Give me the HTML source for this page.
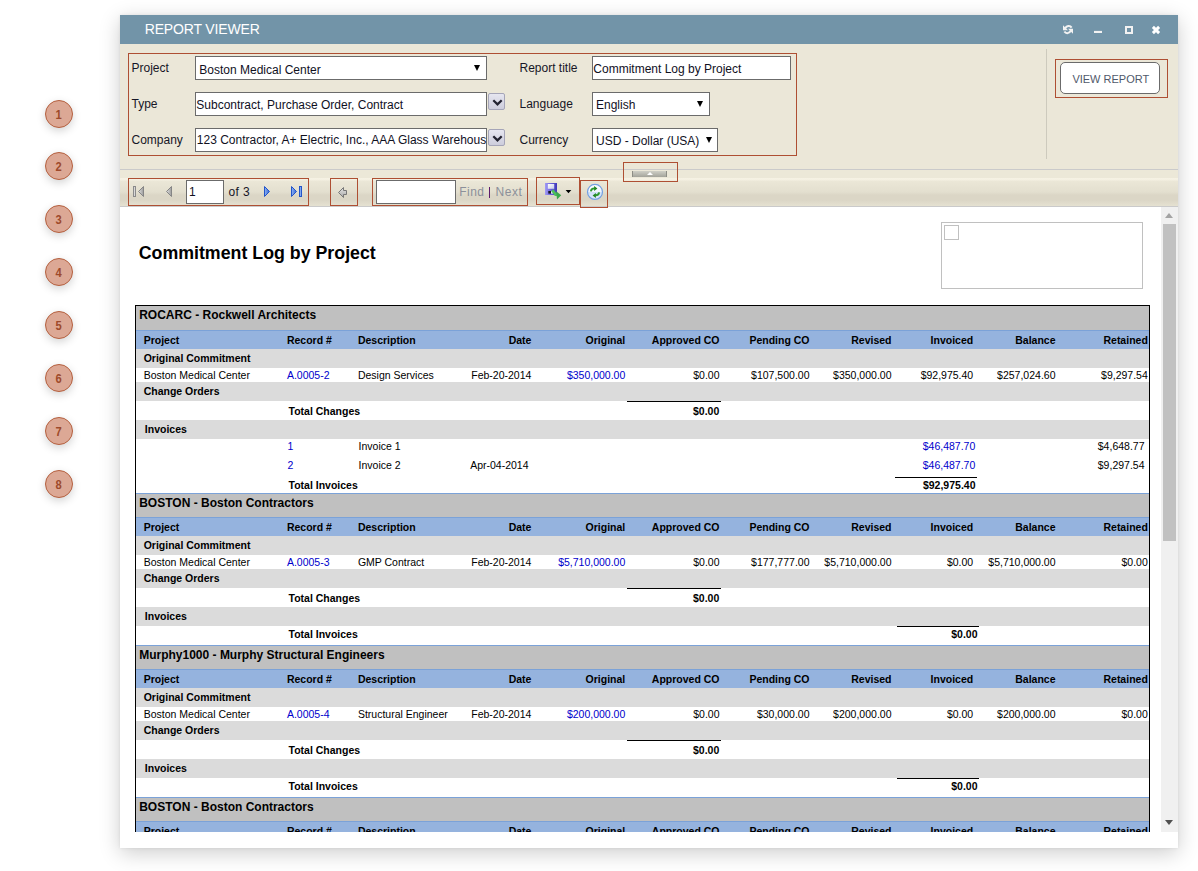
<!DOCTYPE html>
<html><head><meta charset="utf-8">
<style>
*{box-sizing:border-box;margin:0;padding:0}
html,body{width:1198px;height:871px;overflow:hidden;background:#fff;font-family:"Liberation Sans",sans-serif;position:relative}
.a{position:absolute}
.t{position:absolute;white-space:nowrap;font-family:"Liberation Sans",sans-serif}
.circ{position:absolute;left:45px;width:28px;height:28px;border-radius:50%;background:#dca895;border:1px solid #b5603f;color:#9e4a2b;font-weight:bold;font-size:13px;line-height:28px;text-align:center;box-shadow:0 3px 9px rgba(0,0,0,0.17)}
.circ span{display:inline-block;transform:scaleX(0.86)}
.dbtn{width:17px;height:17px;border:1px solid #a5a5b8;border-radius:2px;background:linear-gradient(#e6e6f0,#cdcddc)}
</style></head><body>
<div class="circ" style="top:100px"><span>1</span></div>
<div class="circ" style="top:152px"><span>2</span></div>
<div class="circ" style="top:205px"><span>3</span></div>
<div class="circ" style="top:258px"><span>4</span></div>
<div class="circ" style="top:311px"><span>5</span></div>
<div class="circ" style="top:364px"><span>6</span></div>
<div class="circ" style="top:417px"><span>7</span></div>
<div class="circ" style="top:470px"><span>8</span></div>
<div class="a" style="left:120px;top:15px;width:1058px;height:833px;background:#fff;box-shadow:0 5px 20px rgba(0,0,0,0.20),0 0 3px rgba(0,0,0,0.08)"></div>
<div class="a" style="left:120px;top:15px;width:1058px;height:29px;background:#7294a8"></div>
<div class="t" style="left:144.7px;top:20.9px;font-size:14px;line-height:16px;color:#fff;letter-spacing:-0.15px">REPORT VIEWER</div>
<svg class="a" style="left:1060px;top:22px" width="110" height="16" viewBox="1060 22 110 16">
<g fill="#f2f2f2">
<path d="M1063 25.3 L1063 30.3 L1068 30.3 Z"/>
<path d="M1073 33.7 L1073 28.7 L1068 28.7 Z"/>
</g>
<path d="M1065 28.6 Q1066.5 25.8 1068.8 25.9 Q1070.6 26 1071.6 27.6" fill="none" stroke="#f2f2f2" stroke-width="2"/>
<path d="M1071 30.6 Q1069.5 33.3 1067.2 33.2 Q1065.4 33.1 1064.4 31.5" fill="none" stroke="#f2f2f2" stroke-width="2"/>
<rect x="1094" y="30.9" width="8" height="2.1" fill="#f2f2f2"/>
<path fill-rule="evenodd" fill="#f2f2f2" d="M1125 26 H1133 V34 H1125 Z M1127 28 V32 H1131 V28 Z"/>
<path d="M1152.9 26.9 L1159.1 33.1 M1159.1 26.9 L1152.9 33.1" stroke="#fff" stroke-width="2.9" stroke-linecap="butt"/>
</svg>
<div class="a" style="left:120px;top:44px;width:1058px;height:125px;background:#ebe7d8"></div>
<div class="a" style="left:128px;top:53px;width:669px;height:103px;border:1px solid #ae4f33"></div>
<div class="t" style="left:131.5px;top:61.3px;font-size:12px;line-height:14px;color:#161626;">Project</div>
<div class="t" style="left:131.5px;top:97.3px;font-size:12px;line-height:14px;color:#161626;">Type</div>
<div class="t" style="left:131.5px;top:133.3px;font-size:12px;line-height:14px;color:#161626;">Company</div>
<div class="t" style="left:519.5px;top:61.3px;font-size:12px;line-height:14px;color:#161626;">Report title</div>
<div class="t" style="left:519.5px;top:97.3px;font-size:12px;line-height:14px;color:#161626;">Language</div>
<div class="t" style="left:519.5px;top:133.3px;font-size:12px;line-height:14px;color:#161626;">Currency</div>
<div class="a" style="left:195px;top:56px;width:292px;height:24px;background:#fff;border:1px solid #6b6b6b"></div>
<div class="t" style="left:199.3px;top:62.5px;font-size:12px;line-height:14px;color:#10101e;">Boston Medical Center</div>
<div class="a" style="left:474px;top:65px;width:6px;height:6px;width:0;height:0;border-left:3px solid transparent;border-right:3px solid transparent;border-top:6px solid #000"></div>
<div class="a" style="left:195px;top:92px;width:292px;height:24px;background:#fff;border:1px solid #6b6b6b"></div>
<div class="t" style="left:196.3px;top:98.0px;font-size:12px;line-height:14px;color:#10101e;">Subcontract, Purchase Order, Contract</div>
<div class="a" style="left:195px;top:128px;width:292px;height:24px;overflow:hidden;background:#fff;border:1px solid #6b6b6b"><div class="t" style="left:0.8px;top:3.7px;font-size:12px;line-height:14px;color:#10101e;">123 Contractor, A+ Electric, Inc., AAA Glass Warehouse</div></div>
<div class="a dbtn" style="left:488px;top:93px"><svg width="17" height="17" viewBox="0 0 17 17" style="position:absolute;left:0;top:0"><path d="M4.3 6.2 L8.5 10.4 L12.7 6.2" fill="none" stroke="#222230" stroke-width="2.2"/></svg></div>
<div class="a dbtn" style="left:488px;top:129px"><svg width="17" height="17" viewBox="0 0 17 17" style="position:absolute;left:0;top:0"><path d="M4.3 6.2 L8.5 10.4 L12.7 6.2" fill="none" stroke="#222230" stroke-width="2.2"/></svg></div>
<div class="a" style="left:592px;top:56px;width:199px;height:24px;background:#fff;border:1px solid #6b6b6b"></div>
<div class="t" style="left:593.3px;top:62.0px;font-size:12px;line-height:14px;color:#10101e;">Commitment Log by Project</div>
<div class="a" style="left:592px;top:92px;width:118px;height:24px;background:#fff;border:1px solid #6b6b6b"></div>
<div class="t" style="left:596.0px;top:98.1px;font-size:12px;line-height:14px;color:#10101e;">English</div>
<div class="a" style="left:697px;top:101px;width:6px;height:6px;width:0;height:0;border-left:3px solid transparent;border-right:3px solid transparent;border-top:6px solid #000"></div>
<div class="a" style="left:592px;top:128px;width:126px;height:24px;background:#fff;border:1px solid #6b6b6b"></div>
<div class="t" style="left:596.0px;top:134.1px;font-size:12px;line-height:14px;color:#10101e;">USD - Dollar (USA)</div>
<div class="a" style="left:706px;top:137px;width:6px;height:6px;width:0;height:0;border-left:3px solid transparent;border-right:3px solid transparent;border-top:6px solid #000"></div>
<div class="a" style="left:1046px;top:49px;width:1px;height:110px;background:#cdcabd"></div>
<div class="a" style="left:1055px;top:59px;width:113px;height:39px;border:1px solid #ae4f33"></div>
<div class="a" style="left:1060px;top:62px;width:100px;height:32px;border:1px solid #6b6b6b;border-radius:5px;background:#fff"></div>
<div class="t" style="left:1072.4px;top:72.7px;font-size:11px;line-height:13px;color:#50586a;">VIEW REPORT</div>
<div class="a" style="left:120px;top:169px;width:1058px;height:1px;background:#cacaca"></div>
<div class="a" style="left:120px;top:170px;width:1058px;height:36px;background:linear-gradient(#ece8d8 0px,#ece8d8 8px,#f6f2e4 8px,#f4f0e2 10px,#ebe7d7 11px,#e3dfcf 22px,#dbd6c6 25px,#dbd6c6 30px,#e5e1d1 36px)"></div>
<div class="a" style="left:120px;top:206px;width:1058px;height:1px;background:#cacaca"></div>
<div class="a" style="left:623px;top:162px;width:55px;height:20px;border:1px solid #ae4f33"></div>
<div class="a" style="left:632px;top:171px;width:35px;height:6px;background:linear-gradient(#cfcfc6,#a3a39a);border-left:1px solid #8d8d85;border-right:1px solid #8d8d85"></div>
<div class="a" style="left:647px;top:172px;width:6px;height:3px;width:0;height:0;border-left:3px solid transparent;border-right:3px solid transparent;border-bottom:3px solid #fff"></div>
<div class="a" style="left:128px;top:178px;width:181px;height:28px;border:1px solid #ae4f33"></div>
<svg class="a" style="left:128px;top:178px" width="182" height="28" viewBox="128 178 182 28">
<defs>
<linearGradient id="gg" x1="0" y1="0" x2="1" y2="0"><stop offset="0" stop-color="#e0e0e0"/><stop offset="1" stop-color="#9c9c9c"/></linearGradient>
<linearGradient id="bg" x1="0" y1="0" x2="1" y2="0"><stop offset="0" stop-color="#8fb4f4"/><stop offset="1" stop-color="#2f62d6"/></linearGradient>
</defs>
<rect x="133.5" y="186.5" width="2" height="10" fill="#d8d8d8" stroke="#8a8a8a"/>
<path d="M138.5 191.5 L143.5 186.5 L143.5 196.5 Z" fill="url(#gg)" stroke="#858585" stroke-linejoin="round"/>
<path d="M166.5 191.5 L171.5 186.5 L171.5 196.5 Z" fill="url(#gg)" stroke="#858585" stroke-linejoin="round"/>
<path d="M264.5 186.5 L269.5 191.5 L264.5 196.5 Z" fill="url(#bg)" stroke="#2355c8" stroke-linejoin="round"/>
<path d="M291.5 186.5 L296.5 191.5 L291.5 196.5 Z" fill="url(#bg)" stroke="#2355c8" stroke-linejoin="round"/>
<rect x="299.5" y="186.5" width="2" height="10" fill="#7fa6f0" stroke="#2355c8"/>
</svg>
<div class="a" style="left:186px;top:180px;width:38px;height:24px;background:#fff;border:1px solid #6b6b6b"></div>
<div class="t" style="left:189.0px;top:184.8px;font-size:12px;line-height:14px;color:#10101e;">1</div>
<div class="t" style="left:228.5px;top:184.8px;font-size:12px;line-height:14px;color:#161626;letter-spacing:0.4px">of 3</div>
<div class="a" style="left:330px;top:178px;width:28px;height:28px;border:1px solid #ae4f33"></div>
<svg class="a" style="left:330px;top:178px" width="28" height="28" viewBox="330 178 28 28">
<defs><linearGradient id="ag" x1="0" y1="0" x2="0" y2="1"><stop offset="0" stop-color="#e6e6e6"/><stop offset="1" stop-color="#a8a8a8"/></linearGradient></defs>
<path d="M338.5 192.5 L343.5 187.5 L343.5 190.5 L346.5 190.5 L346.5 194.5 L343.5 194.5 L343.5 197.5 Z" fill="url(#ag)" stroke="#777" stroke-linejoin="round"/>
</svg>
<div class="a" style="left:372px;top:178px;width:156px;height:28px;border:1px solid #ae4f33"></div>
<div class="a" style="left:376px;top:180px;width:80px;height:24px;background:#fff;border:1px solid #6b6b6b"></div>
<div class="t" style="left:459.2px;top:185.3px;font-size:12px;line-height:14px;color:#8c909a;letter-spacing:0.5px">Find</div>
<div class="a" style="left:488.8px;top:187px;width:1.5px;height:11px;background:#5c1c6c"></div>
<div class="t" style="left:495.6px;top:185.3px;font-size:12px;line-height:14px;color:#8c909a;letter-spacing:0.5px">Next</div>
<div class="a" style="left:536px;top:177px;width:44px;height:28px;border:1px solid #ae4f33"></div>
<svg class="a" style="left:536px;top:177px" width="44" height="28" viewBox="536 177 44 28">
<defs><linearGradient id="fl" x1="0" y1="0" x2="1" y2="0"><stop offset="0" stop-color="#a29cf4"/><stop offset="0.5" stop-color="#6a62dc"/><stop offset="1" stop-color="#4036b8"/></linearGradient>
<linearGradient id="lb" x1="0" y1="0" x2="1" y2="1"><stop offset="0" stop-color="#ffffff"/><stop offset="1" stop-color="#c8cce8"/></linearGradient></defs>
<rect x="545" y="183" width="12" height="12" fill="url(#fl)"/>
<rect x="547.8" y="184" width="6.4" height="4.8" fill="url(#lb)"/>
<rect x="548.3" y="191" width="2.7" height="2.6" fill="#151520"/>
<rect x="551" y="191" width="2" height="2.6" fill="#e0e4f0"/>
<path d="M552.3 190.2 L555.6 194.6 L557.2 194.6" fill="none" stroke="#4cbf5c" stroke-width="2.8" stroke-linejoin="round"/>
<path d="M556.2 191.2 L561.2 195.2 L557 199.4 Z" fill="#3aa84a"/>
<path d="M565.6 190 L571.3 190 L568.45 193.2 Z" fill="#000"/>
</svg>
<div class="a" style="left:580px;top:180px;width:28px;height:28px;border:1px solid #ae4f33"></div>
<svg class="a" style="left:580px;top:180px" width="28" height="28" viewBox="580 180 28 28">
<defs><linearGradient id="rg" x1="0" y1="0" x2="0" y2="1"><stop offset="0" stop-color="#ffffff"/><stop offset="0.5" stop-color="#eef4fd"/><stop offset="0.5" stop-color="#cfe1f8"/><stop offset="1" stop-color="#dde9fb"/></linearGradient></defs>
<circle cx="595" cy="191.9" r="7.5" fill="url(#rg)" stroke="#74a0e2" stroke-width="1.2"/>
<path d="M590.9 191.4 Q591 188.6 594.6 188.4" fill="none" stroke="#2e9a2e" stroke-width="1.9"/>
<path d="M594.1 185.9 L597.4 188.4 L594.1 190.9 Z" fill="#1f861f"/>
<path d="M599.1 192.4 Q599 195.2 595.4 195.4" fill="none" stroke="#2e9a2e" stroke-width="1.9"/>
<path d="M595.9 192.9 L592.6 195.4 L595.9 197.9 Z" fill="#1f861f"/>
</svg>
<div class="a" style="left:1161px;top:207px;width:17px;height:625px;background:#f0f0f0"></div>
<div class="a" style="left:1163px;top:224px;width:13px;height:317px;background:#c1c1c1"></div>
<div class="a" style="left:1165px;top:213px;width:8px;height:5px;width:0;height:0;border-left:4px solid transparent;border-right:4px solid transparent;border-bottom:5px solid #a3a3a3"></div>
<div class="a" style="left:1165px;top:820px;width:8px;height:5px;width:0;height:0;border-left:4px solid transparent;border-right:4px solid transparent;border-top:5px solid #505050"></div>
<div class="t" style="left:138.7px;top:242.6px;font-size:17.8px;line-height:20px;font-weight:bold;color:#000;">Commitment Log by Project</div>
<div class="a" style="left:941px;top:222px;width:202px;height:67px;border:1px solid #c0c0c0"></div>
<div class="a" style="left:944px;top:225px;width:15px;height:15px;border:1px solid #c0c0c0"></div>
<div class="a" style="left:0;top:0;width:1198px;height:832px;overflow:hidden"><div class="a" style="left:135px;top:305px;width:1015px;height:1px;background:#000"></div>
<div class="a" style="left:136px;top:306px;width:1013px;height:24px;background:#c0c0c0"></div>
<div class="t" style="left:139.2px;top:307.6px;font-size:12px;line-height:14px;font-weight:bold;color:#000;">ROCARC - Rockwell Architects</div>
<div class="a" style="left:136px;top:330px;width:1013px;height:1px;background:#7ba2d8"></div>
<div class="a" style="left:136px;top:331px;width:1013px;height:18px;background:#95b3de"></div>
<div class="t" style="left:143.7px;top:334.2px;font-size:10.5px;line-height:12px;font-weight:bold;color:#000;">Project</div>
<div class="t" style="left:286.9px;top:334.2px;font-size:10.5px;line-height:12px;font-weight:bold;color:#000;">Record #</div>
<div class="t" style="left:357.9px;top:334.2px;font-size:10.5px;line-height:12px;font-weight:bold;color:#000;">Description</div>
<div class="t" style="left:131.4px;width:400px;text-align:right;top:334.2px;font-size:10.5px;line-height:12px;font-weight:bold;color:#000;">Date</div>
<div class="t" style="left:225.3px;width:400px;text-align:right;top:334.2px;font-size:10.5px;line-height:12px;font-weight:bold;color:#000;">Original</div>
<div class="t" style="left:319.5px;width:400px;text-align:right;top:334.2px;font-size:10.5px;line-height:12px;font-weight:bold;color:#000;">Approved CO</div>
<div class="t" style="left:409.5px;width:400px;text-align:right;top:334.2px;font-size:10.5px;line-height:12px;font-weight:bold;color:#000;">Pending CO</div>
<div class="t" style="left:491.5px;width:400px;text-align:right;top:334.2px;font-size:10.5px;line-height:12px;font-weight:bold;color:#000;">Revised</div>
<div class="t" style="left:573.2px;width:400px;text-align:right;top:334.2px;font-size:10.5px;line-height:12px;font-weight:bold;color:#000;">Invoiced</div>
<div class="t" style="left:655.5px;width:400px;text-align:right;top:334.2px;font-size:10.5px;line-height:12px;font-weight:bold;color:#000;">Balance</div>
<div class="t" style="left:747.8px;width:400px;text-align:right;top:334.2px;font-size:10.5px;line-height:12px;font-weight:bold;color:#000;">Retained</div>
<div class="a" style="left:136px;top:349px;width:1013px;height:19px;background:#dbdbdb"></div>
<div class="t" style="left:143.7px;top:351.9px;font-size:10.5px;line-height:12px;font-weight:bold;color:#000;">Original Commitment</div>
<div class="t" style="left:143.7px;top:368.5px;font-size:10.5px;line-height:12px;color:#000;">Boston Medical Center</div>
<div class="t" style="left:286.9px;top:368.5px;font-size:10.5px;line-height:12px;color:#0000cc;">A.0005-2</div>
<div class="t" style="left:357.9px;top:368.5px;font-size:10.5px;line-height:12px;color:#000;">Design Services</div>
<div class="t" style="left:131.4px;width:400px;text-align:right;top:368.5px;font-size:10.5px;line-height:12px;color:#000;">Feb-20-2014</div>
<div class="t" style="left:225.3px;width:400px;text-align:right;top:368.5px;font-size:10.5px;line-height:12px;color:#0000cc;">$350,000.00</div>
<div class="t" style="left:319.5px;width:400px;text-align:right;top:368.5px;font-size:10.5px;line-height:12px;color:#000;">$0.00</div>
<div class="t" style="left:409.5px;width:400px;text-align:right;top:368.5px;font-size:10.5px;line-height:12px;color:#000;">$107,500.00</div>
<div class="t" style="left:491.5px;width:400px;text-align:right;top:368.5px;font-size:10.5px;line-height:12px;color:#000;">$350,000.00</div>
<div class="t" style="left:573.2px;width:400px;text-align:right;top:368.5px;font-size:10.5px;line-height:12px;color:#000;">$92,975.40</div>
<div class="t" style="left:655.5px;width:400px;text-align:right;top:368.5px;font-size:10.5px;line-height:12px;color:#000;">$257,024.60</div>
<div class="t" style="left:747.8px;width:400px;text-align:right;top:368.5px;font-size:10.5px;line-height:12px;color:#000;">$9,297.54</div>
<div class="a" style="left:136px;top:382px;width:1013px;height:19px;background:#dbdbdb"></div>
<div class="t" style="left:143.7px;top:385.1px;font-size:10.5px;line-height:12px;font-weight:bold;color:#000;">Change Orders</div>
<div class="a" style="left:627px;top:401px;width:94px;height:1px;background:#000"></div>
<div class="t" style="left:288.5px;top:404.9px;font-size:10.5px;line-height:12px;font-weight:bold;color:#000;">Total Changes</div>
<div class="t" style="left:319.3px;width:400px;text-align:right;top:404.9px;font-size:10.5px;line-height:12px;font-weight:bold;color:#000;">$0.00</div>
<div class="a" style="left:136px;top:420px;width:1013px;height:19px;background:#dbdbdb"></div>
<div class="t" style="left:144.8px;top:423.4px;font-size:10.5px;line-height:12px;font-weight:bold;color:#000;">Invoices</div>
<div class="t" style="left:287.6px;top:439.8px;font-size:10.5px;line-height:12px;color:#0000cc;">1</div>
<div class="t" style="left:358.6px;top:439.8px;font-size:10.5px;line-height:12px;color:#000;">Invoice 1</div>
<div class="t" style="left:575.3px;width:400px;text-align:right;top:439.8px;font-size:10.5px;line-height:12px;color:#0000cc;">$46,487.70</div>
<div class="t" style="left:744.5px;width:400px;text-align:right;top:439.8px;font-size:10.5px;line-height:12px;color:#000;">$4,648.77</div>
<div class="t" style="left:287.6px;top:459.0px;font-size:10.5px;line-height:12px;color:#0000cc;">2</div>
<div class="t" style="left:358.6px;top:459.0px;font-size:10.5px;line-height:12px;color:#000;">Invoice 2</div>
<div class="t" style="left:128.5px;width:400px;text-align:right;top:459.0px;font-size:10.5px;line-height:12px;color:#000;">Apr-04-2014</div>
<div class="t" style="left:575.3px;width:400px;text-align:right;top:459.0px;font-size:10.5px;line-height:12px;color:#0000cc;">$46,487.70</div>
<div class="t" style="left:744.5px;width:400px;text-align:right;top:459.0px;font-size:10.5px;line-height:12px;color:#000;">$9,297.54</div>
<div class="a" style="left:895px;top:477px;width:82px;height:1px;background:#000"></div>
<div class="t" style="left:288.5px;top:479.4px;font-size:10.5px;line-height:12px;font-weight:bold;color:#000;">Total Invoices</div>
<div class="t" style="left:575.5px;width:400px;text-align:right;top:479.4px;font-size:10.5px;line-height:12px;font-weight:bold;color:#000;">$92,975.40</div>
<div class="a" style="left:135px;top:493px;width:1015px;height:1px;background:#7ba2d8"></div>
<div class="a" style="left:136px;top:494px;width:1013px;height:23px;background:#c0c0c0"></div>
<div class="t" style="left:139.2px;top:495.6px;font-size:12px;line-height:14px;font-weight:bold;color:#000;">BOSTON - Boston Contractors</div>
<div class="a" style="left:136px;top:517px;width:1013px;height:1px;background:#7ba2d8"></div>
<div class="a" style="left:136px;top:518px;width:1013px;height:18px;background:#95b3de"></div>
<div class="t" style="left:143.7px;top:521.2px;font-size:10.5px;line-height:12px;font-weight:bold;color:#000;">Project</div>
<div class="t" style="left:286.9px;top:521.2px;font-size:10.5px;line-height:12px;font-weight:bold;color:#000;">Record #</div>
<div class="t" style="left:357.9px;top:521.2px;font-size:10.5px;line-height:12px;font-weight:bold;color:#000;">Description</div>
<div class="t" style="left:131.4px;width:400px;text-align:right;top:521.2px;font-size:10.5px;line-height:12px;font-weight:bold;color:#000;">Date</div>
<div class="t" style="left:225.3px;width:400px;text-align:right;top:521.2px;font-size:10.5px;line-height:12px;font-weight:bold;color:#000;">Original</div>
<div class="t" style="left:319.5px;width:400px;text-align:right;top:521.2px;font-size:10.5px;line-height:12px;font-weight:bold;color:#000;">Approved CO</div>
<div class="t" style="left:409.5px;width:400px;text-align:right;top:521.2px;font-size:10.5px;line-height:12px;font-weight:bold;color:#000;">Pending CO</div>
<div class="t" style="left:491.5px;width:400px;text-align:right;top:521.2px;font-size:10.5px;line-height:12px;font-weight:bold;color:#000;">Revised</div>
<div class="t" style="left:573.2px;width:400px;text-align:right;top:521.2px;font-size:10.5px;line-height:12px;font-weight:bold;color:#000;">Invoiced</div>
<div class="t" style="left:655.5px;width:400px;text-align:right;top:521.2px;font-size:10.5px;line-height:12px;font-weight:bold;color:#000;">Balance</div>
<div class="t" style="left:747.8px;width:400px;text-align:right;top:521.2px;font-size:10.5px;line-height:12px;font-weight:bold;color:#000;">Retained</div>
<div class="a" style="left:136px;top:536px;width:1013px;height:19px;background:#dbdbdb"></div>
<div class="t" style="left:143.7px;top:538.9px;font-size:10.5px;line-height:12px;font-weight:bold;color:#000;">Original Commitment</div>
<div class="t" style="left:143.7px;top:555.5px;font-size:10.5px;line-height:12px;color:#000;">Boston Medical Center</div>
<div class="t" style="left:286.9px;top:555.5px;font-size:10.5px;line-height:12px;color:#0000cc;">A.0005-3</div>
<div class="t" style="left:357.9px;top:555.5px;font-size:10.5px;line-height:12px;color:#000;">GMP Contract</div>
<div class="t" style="left:131.4px;width:400px;text-align:right;top:555.5px;font-size:10.5px;line-height:12px;color:#000;">Feb-20-2014</div>
<div class="t" style="left:225.3px;width:400px;text-align:right;top:555.5px;font-size:10.5px;line-height:12px;color:#0000cc;">$5,710,000.00</div>
<div class="t" style="left:319.5px;width:400px;text-align:right;top:555.5px;font-size:10.5px;line-height:12px;color:#000;">$0.00</div>
<div class="t" style="left:409.5px;width:400px;text-align:right;top:555.5px;font-size:10.5px;line-height:12px;color:#000;">$177,777.00</div>
<div class="t" style="left:491.5px;width:400px;text-align:right;top:555.5px;font-size:10.5px;line-height:12px;color:#000;">$5,710,000.00</div>
<div class="t" style="left:573.2px;width:400px;text-align:right;top:555.5px;font-size:10.5px;line-height:12px;color:#000;">$0.00</div>
<div class="t" style="left:655.5px;width:400px;text-align:right;top:555.5px;font-size:10.5px;line-height:12px;color:#000;">$5,710,000.00</div>
<div class="t" style="left:747.8px;width:400px;text-align:right;top:555.5px;font-size:10.5px;line-height:12px;color:#000;">$0.00</div>
<div class="a" style="left:136px;top:569px;width:1013px;height:19px;background:#dbdbdb"></div>
<div class="t" style="left:143.7px;top:572.1px;font-size:10.5px;line-height:12px;font-weight:bold;color:#000;">Change Orders</div>
<div class="a" style="left:627px;top:588px;width:94px;height:1px;background:#000"></div>
<div class="t" style="left:288.5px;top:591.9px;font-size:10.5px;line-height:12px;font-weight:bold;color:#000;">Total Changes</div>
<div class="t" style="left:319.3px;width:400px;text-align:right;top:591.9px;font-size:10.5px;line-height:12px;font-weight:bold;color:#000;">$0.00</div>
<div class="a" style="left:136px;top:607px;width:1013px;height:19px;background:#dbdbdb"></div>
<div class="t" style="left:144.8px;top:610.4px;font-size:10.5px;line-height:12px;font-weight:bold;color:#000;">Invoices</div>
<div class="a" style="left:897px;top:626px;width:82px;height:1px;background:#000"></div>
<div class="t" style="left:288.5px;top:628.4px;font-size:10.5px;line-height:12px;font-weight:bold;color:#000;">Total Invoices</div>
<div class="t" style="left:577.5px;width:400px;text-align:right;top:628.4px;font-size:10.5px;line-height:12px;font-weight:bold;color:#000;">$0.00</div>
<div class="a" style="left:135px;top:645px;width:1015px;height:1px;background:#7ba2d8"></div>
<div class="a" style="left:136px;top:646px;width:1013px;height:23px;background:#c0c0c0"></div>
<div class="t" style="left:139.2px;top:647.6px;font-size:12px;line-height:14px;font-weight:bold;color:#000;">Murphy1000 - Murphy Structural Engineers</div>
<div class="a" style="left:136px;top:669px;width:1013px;height:1px;background:#7ba2d8"></div>
<div class="a" style="left:136px;top:670px;width:1013px;height:18px;background:#95b3de"></div>
<div class="t" style="left:143.7px;top:673.2px;font-size:10.5px;line-height:12px;font-weight:bold;color:#000;">Project</div>
<div class="t" style="left:286.9px;top:673.2px;font-size:10.5px;line-height:12px;font-weight:bold;color:#000;">Record #</div>
<div class="t" style="left:357.9px;top:673.2px;font-size:10.5px;line-height:12px;font-weight:bold;color:#000;">Description</div>
<div class="t" style="left:131.4px;width:400px;text-align:right;top:673.2px;font-size:10.5px;line-height:12px;font-weight:bold;color:#000;">Date</div>
<div class="t" style="left:225.3px;width:400px;text-align:right;top:673.2px;font-size:10.5px;line-height:12px;font-weight:bold;color:#000;">Original</div>
<div class="t" style="left:319.5px;width:400px;text-align:right;top:673.2px;font-size:10.5px;line-height:12px;font-weight:bold;color:#000;">Approved CO</div>
<div class="t" style="left:409.5px;width:400px;text-align:right;top:673.2px;font-size:10.5px;line-height:12px;font-weight:bold;color:#000;">Pending CO</div>
<div class="t" style="left:491.5px;width:400px;text-align:right;top:673.2px;font-size:10.5px;line-height:12px;font-weight:bold;color:#000;">Revised</div>
<div class="t" style="left:573.2px;width:400px;text-align:right;top:673.2px;font-size:10.5px;line-height:12px;font-weight:bold;color:#000;">Invoiced</div>
<div class="t" style="left:655.5px;width:400px;text-align:right;top:673.2px;font-size:10.5px;line-height:12px;font-weight:bold;color:#000;">Balance</div>
<div class="t" style="left:747.8px;width:400px;text-align:right;top:673.2px;font-size:10.5px;line-height:12px;font-weight:bold;color:#000;">Retained</div>
<div class="a" style="left:136px;top:688px;width:1013px;height:19px;background:#dbdbdb"></div>
<div class="t" style="left:143.7px;top:690.9px;font-size:10.5px;line-height:12px;font-weight:bold;color:#000;">Original Commitment</div>
<div class="t" style="left:143.7px;top:707.5px;font-size:10.5px;line-height:12px;color:#000;">Boston Medical Center</div>
<div class="t" style="left:286.9px;top:707.5px;font-size:10.5px;line-height:12px;color:#0000cc;">A.0005-4</div>
<div class="t" style="left:357.9px;top:707.5px;font-size:10.5px;line-height:12px;color:#000;">Structural Engineer</div>
<div class="t" style="left:131.4px;width:400px;text-align:right;top:707.5px;font-size:10.5px;line-height:12px;color:#000;">Feb-20-2014</div>
<div class="t" style="left:225.3px;width:400px;text-align:right;top:707.5px;font-size:10.5px;line-height:12px;color:#0000cc;">$200,000.00</div>
<div class="t" style="left:319.5px;width:400px;text-align:right;top:707.5px;font-size:10.5px;line-height:12px;color:#000;">$0.00</div>
<div class="t" style="left:409.5px;width:400px;text-align:right;top:707.5px;font-size:10.5px;line-height:12px;color:#000;">$30,000.00</div>
<div class="t" style="left:491.5px;width:400px;text-align:right;top:707.5px;font-size:10.5px;line-height:12px;color:#000;">$200,000.00</div>
<div class="t" style="left:573.2px;width:400px;text-align:right;top:707.5px;font-size:10.5px;line-height:12px;color:#000;">$0.00</div>
<div class="t" style="left:655.5px;width:400px;text-align:right;top:707.5px;font-size:10.5px;line-height:12px;color:#000;">$200,000.00</div>
<div class="t" style="left:747.8px;width:400px;text-align:right;top:707.5px;font-size:10.5px;line-height:12px;color:#000;">$0.00</div>
<div class="a" style="left:136px;top:721px;width:1013px;height:19px;background:#dbdbdb"></div>
<div class="t" style="left:143.7px;top:724.1px;font-size:10.5px;line-height:12px;font-weight:bold;color:#000;">Change Orders</div>
<div class="a" style="left:627px;top:740px;width:94px;height:1px;background:#000"></div>
<div class="t" style="left:288.5px;top:743.9px;font-size:10.5px;line-height:12px;font-weight:bold;color:#000;">Total Changes</div>
<div class="t" style="left:319.3px;width:400px;text-align:right;top:743.9px;font-size:10.5px;line-height:12px;font-weight:bold;color:#000;">$0.00</div>
<div class="a" style="left:136px;top:759px;width:1013px;height:19px;background:#dbdbdb"></div>
<div class="t" style="left:144.8px;top:762.4px;font-size:10.5px;line-height:12px;font-weight:bold;color:#000;">Invoices</div>
<div class="a" style="left:897px;top:778px;width:82px;height:1px;background:#000"></div>
<div class="t" style="left:288.5px;top:780.4px;font-size:10.5px;line-height:12px;font-weight:bold;color:#000;">Total Invoices</div>
<div class="t" style="left:577.5px;width:400px;text-align:right;top:780.4px;font-size:10.5px;line-height:12px;font-weight:bold;color:#000;">$0.00</div>
<div class="a" style="left:135px;top:797px;width:1015px;height:1px;background:#7ba2d8"></div>
<div class="a" style="left:136px;top:798px;width:1013px;height:23px;background:#c0c0c0"></div>
<div class="t" style="left:139.2px;top:799.6px;font-size:12px;line-height:14px;font-weight:bold;color:#000;">BOSTON - Boston Contractors</div>
<div class="a" style="left:136px;top:821px;width:1013px;height:1px;background:#7ba2d8"></div>
<div class="a" style="left:136px;top:822px;width:1013px;height:18px;background:#95b3de"></div>
<div class="t" style="left:143.7px;top:825.2px;font-size:10.5px;line-height:12px;font-weight:bold;color:#000;">Project</div>
<div class="t" style="left:286.9px;top:825.2px;font-size:10.5px;line-height:12px;font-weight:bold;color:#000;">Record #</div>
<div class="t" style="left:357.9px;top:825.2px;font-size:10.5px;line-height:12px;font-weight:bold;color:#000;">Description</div>
<div class="t" style="left:131.4px;width:400px;text-align:right;top:825.2px;font-size:10.5px;line-height:12px;font-weight:bold;color:#000;">Date</div>
<div class="t" style="left:225.3px;width:400px;text-align:right;top:825.2px;font-size:10.5px;line-height:12px;font-weight:bold;color:#000;">Original</div>
<div class="t" style="left:319.5px;width:400px;text-align:right;top:825.2px;font-size:10.5px;line-height:12px;font-weight:bold;color:#000;">Approved CO</div>
<div class="t" style="left:409.5px;width:400px;text-align:right;top:825.2px;font-size:10.5px;line-height:12px;font-weight:bold;color:#000;">Pending CO</div>
<div class="t" style="left:491.5px;width:400px;text-align:right;top:825.2px;font-size:10.5px;line-height:12px;font-weight:bold;color:#000;">Revised</div>
<div class="t" style="left:573.2px;width:400px;text-align:right;top:825.2px;font-size:10.5px;line-height:12px;font-weight:bold;color:#000;">Invoiced</div>
<div class="t" style="left:655.5px;width:400px;text-align:right;top:825.2px;font-size:10.5px;line-height:12px;font-weight:bold;color:#000;">Balance</div>
<div class="t" style="left:747.8px;width:400px;text-align:right;top:825.2px;font-size:10.5px;line-height:12px;font-weight:bold;color:#000;">Retained</div>
<div class="a" style="left:135px;top:305px;width:1px;height:527px;background:#000"></div>
<div class="a" style="left:1149px;top:305px;width:1px;height:527px;background:#000"></div></div>
</body></html>
